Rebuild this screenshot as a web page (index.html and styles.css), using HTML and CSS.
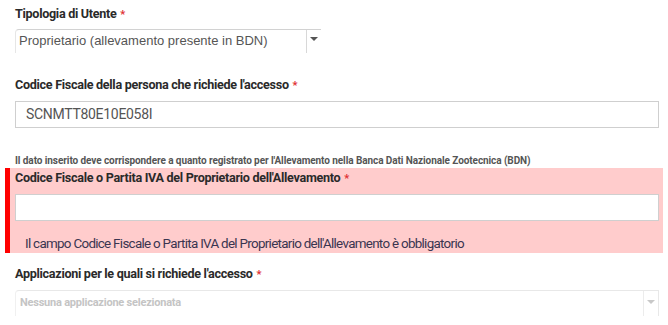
FILE: index.html
```html
<!DOCTYPE html>
<html lang="it">
<head>
<meta charset="utf-8">
<link rel="stylesheet" href="styles.css">
</head>
<body>
<form class="form">
  <div class="group g1">
    <label class="lbl">Tipologia di Utente <span class="req">*</span></label>
    <div class="sel sel-small">
      <span class="sel-text">Proprietario (allevamento presente in BDN)</span>
      <span class="sel-btn"><span class="caret"></span></span>
    </div>
  </div>

  <div class="group g2">
    <label class="lbl">Codice Fiscale della persona che richiede l'accesso <span class="req">*</span></label>
    <div class="inp"><span class="val">SCNMTT80E10E058I</span></div>
  </div>

  <p class="help">Il dato inserito deve corrispondere a quanto registrato per l'Allevamento nella Banca Dati Nazionale Zootecnica (BDN)</p>

  <div class="group err">
    <label class="lbl">Codice Fiscale o Partita IVA del Proprietario dell'Allevamento <span class="req">*</span></label>
    <div class="inp white"></div>
    <p class="errmsg">Il campo Codice Fiscale o Partita IVA del Proprietario dell'Allevamento è obbligatorio</p>
  </div>

  <div class="group g4">
    <label class="lbl">Applicazioni per le quali si richiede l'accesso <span class="req">*</span></label>
    <div class="sel sel-wide">
      <span class="sel-text ph">Nessuna applicazione selezionata</span>
      <span class="sel-btn light"><span class="caret"></span></span>
    </div>
  </div>
</form>
</body>
</html>
```
FILE: styles.css
```css
html, body {
  margin: 0;
  padding: 0;
  background: #fff;
}
body {
  font-family: Roboto, "Open Sans", sans-serif;
  color: #333;
  width: 668px;
  height: 325px;
  overflow: hidden;
}
.form {
  display: flex;
  flex-direction: column;
}
.group {
  display: flex;
  flex-direction: column;
  padding-left: 15px;
  width: 644px;
}
.lbl {
  display: block;
  font-family: Roboto, sans-serif;
  font-weight: 700;
  font-size: 12.6px;
  letter-spacing: -0.3px;
  line-height: 18px;
  height: 18px;
  color: #2a2a2a;
}
.req {
  color: #e03030;
  font-size: 11px;
  line-height: 1;
  margin-left: 1px;
}
.g1 { margin-top: 5px; }
.g1 .lbl { margin-bottom: 6px; }

.sel {
  display: flex;
  align-items: stretch;
  box-sizing: border-box;
  border-top: 1px solid #d2d2d2;
  border-left: 1px solid #e6e6e6;
  border-top-left-radius: 4px;
  height: 24px;
}
.sel-small { width: 306px; }
.sel-wide {
  width: 644px;
  border-top-color: #e8e8e8;
  border-left-color: #f0f0f0;
  border-right: 1px solid #e8e8e8;
  height: 26px;
}
.sel-text {
  flex: 1;
  font-family: "Liberation Sans", Arial, sans-serif;
  font-size: 13px;
  color: #555;
  padding-left: 3px;
  line-height: 22px;
  white-space: nowrap;
}
.sel-text.ph {
  font-family: Roboto, sans-serif;
  font-weight: 700;
  font-size: 11px;
  letter-spacing: -0.22px;
  color: #c4c4c4;
  padding-left: 4px;
  line-height: 24px;
}
.sel-btn {
  width: 15px;
  border-left: 1px solid #d8d8d8;
  display: flex;
  justify-content: center;
  padding-top: 7px;
  box-sizing: border-box;
}
.sel-wide .sel-btn { border-left-color: #ececec; padding-top: 9px; }
.caret {
  width: 0;
  height: 0;
  border-left: 4px solid transparent;
  border-right: 4px solid transparent;
  border-top: 4px solid #555;
}
.sel-btn.light .caret { border-top-color: #c8c8c8; }

.g2 { margin-top: 23px; }
.g2 .lbl { margin-bottom: 7px; }
.inp {
  box-sizing: border-box;
  width: 644px;
  height: 27px;
  border: 1px solid #cfcfcf;
  background: #fff;
}
.val {
  display: block;
  padding-left: 10px;
  font-family: Roboto, sans-serif;
  font-size: 14px;
  letter-spacing: -0.3px;
  line-height: 25px;
  color: #555;
}
.help {
  margin: 27px 0 0 15px;
  font-family: Roboto, sans-serif;
  font-weight: 700;
  font-size: 10px;
  letter-spacing: -0.08px;
  line-height: 12px;
  height: 12px;
  color: #555;
}
.err {
  margin-left: 5px;
  border-left: 5px solid #ff0000;
  background: #ffcccc;
  padding-left: 5px;
  padding-right: 4px;
  width: 644px;
  height: 85px;
  box-sizing: content-box;
  margin-top: 1px;
}
.err .lbl { margin-top: 1px; margin-bottom: 7px; }
.errmsg {
  margin: 15px 0 0 10px;
  font-family: Roboto, sans-serif;
  font-size: 13.4px;
  letter-spacing: -0.7px;
  line-height: 16px;
  color: #3a3550;
}
.g4 { margin-top: 12px; }
.g4 .lbl { margin-bottom: 7px; }
```
